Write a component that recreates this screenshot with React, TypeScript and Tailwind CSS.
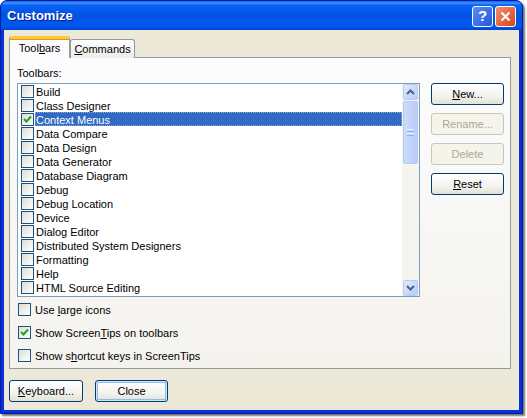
import React from 'react';

const toolbars = [
    'Build',
    'Class Designer',
    'Context Menus',
    'Data Compare',
    'Data Design',
    'Data Generator',
    'Database Diagram',
    'Debug',
    'Debug Location',
    'Device',
    'Dialog Editor',
    'Distributed System Designers',
    'Formatting',
    'Help',
    'HTML Source Editing',
];

const CheckBox = ({ checked }: { checked?: boolean }) => (
    <span className="flex h-[13px] w-[13px] shrink-0 items-center justify-center border border-[#1C5180] bg-[linear-gradient(135deg,#DCDCD7,#FFFFFF)]">
        {checked && (
            <svg width="9" height="9" viewBox="0 0 9 9">
                <path d="M1 4 L3.5 6.5 L8 1.5" stroke="#21A121" strokeWidth="2" fill="none" />
            </svg>
        )}
    </span>
);

const XpButton = ({
    children,
    disabled,
    isDefault,
    className = '',
}: {
    children: React.ReactNode;
    disabled?: boolean;
    isDefault?: boolean;
    className?: string;
}) => (
    <button
        type="button"
        className={
            disabled
                ? `flex h-[22px] w-[73px] items-center justify-center rounded-[3px] border border-[#C9C7BA] bg-[#F5F4EA] pt-[1px] text-[#ACA899] ${className}`
                : isDefault
                  ? `flex h-[22px] w-[73px] items-center justify-center rounded-[3px] border border-[#003C74] bg-[linear-gradient(180deg,#FFFFFF_0%,#F3F3EF_60%,#E3E1D6_100%)] pt-[1px] text-black shadow-[inset_0_0_0_1px_#CEE7FF,inset_0_0_0_2px_#98B8EA] ${className}`
                  : `flex h-[22px] w-[73px] items-center justify-center rounded-[3px] border border-[#003C74] bg-[linear-gradient(180deg,#FFFFFF_0%,#F3F3EF_60%,#E3E1D6_100%)] pt-[1px] text-black ${className}`
        }
    >
        {children}
    </button>
);

const ScrollArrow = ({ down }: { down?: boolean }) => (
    <div className="flex h-[16px] w-[15px] items-center justify-center rounded-[2px] border border-[#B7CAF5] bg-[linear-gradient(135deg,#E1EAFE,#B8CCF9)]">
        <svg width="9" height="6" viewBox="0 0 9 6">
            <path
                d={down ? 'M1 1 L4.5 4.5 L8 1' : 'M1 5 L4.5 1.5 L8 5'}
                stroke="#4D6185"
                strokeWidth="2"
                fill="none"
            />
        </svg>
    </div>
);

export default function App() {
    return (
        <div className="h-[418px] w-[527px] bg-white font-['Liberation_Sans',Arial,sans-serif] text-[11px] text-black">
            <div className="flex h-[414px] w-[523px] flex-col overflow-hidden rounded-t-[7px] border border-[#001A9C] bg-[#0831D9] shadow-[2px_2px_2px_rgba(0,0,0,0.55)]">
                {/* title bar */}
                <div className="flex h-[29px] shrink-0 items-center bg-[linear-gradient(180deg,#0A5FE9_0%,#3D95FF_7%,#0A61F6_14%,#0054E3_50%,#0058EE_88%,#0042D2_100%)] pl-[6px] pr-[6px]">
                    <span className="flex-1 pt-[1px] text-[13px] font-bold text-white [text-shadow:1px_1px_#0A1883]">
                        Customize
                    </span>
                    <div className="flex gap-[2px] pt-[1px]">
                        <div className="flex h-[21px] w-[21px] items-center justify-center rounded-[3px] border border-white bg-[linear-gradient(135deg,#5A8DF5,#2358D8)] text-[15px] font-bold text-white">
                            ?
                        </div>
                        <div className="flex h-[21px] w-[21px] items-center justify-center rounded-[3px] border border-white bg-[linear-gradient(135deg,#F0906E,#D5441F)]">
                            <svg width="11" height="11" viewBox="0 0 11 11">
                                <path d="M1.5 1.5 L9.5 9.5 M9.5 1.5 L1.5 9.5" stroke="white" strokeWidth="2.2" />
                            </svg>
                        </div>
                    </div>
                </div>

                {/* client area */}
                <div className="mx-[3px] mb-[3px] flex flex-1 flex-col bg-[#ECE9D8] pl-[5px] pr-[8px] pt-[6px]">
                    {/* tabs */}
                    <div className="relative z-10 -mb-px flex h-[22px] items-end">
                        <div className="flex h-[22px] w-[61px] flex-col rounded-t-[3px] border-x border-[#919B9C] bg-[#FCFCFE]">
                            <div className="h-[3px] rounded-t-[3px] bg-[#FFC83C] shadow-[0_1px_0_#E69A00]" />
                            <div className="flex flex-1 items-center justify-center">
                                Tool<span className="underline">b</span>ars
                            </div>
                        </div>
                        <div className="flex h-[19px] w-[65px] items-center justify-center rounded-t-[3px] border border-b-0 border-[#919B9C] bg-[linear-gradient(180deg,#FFFFFF,#ECEBE6)] pt-[1px]">
                            <span className="underline">C</span>ommands
                        </div>
                    </div>

                    {/* panel */}
                    <div className="flex h-[312px] flex-col border border-[#919B9C] bg-[linear-gradient(180deg,#FCFCFE,#F4F3EE)] pl-[7px] pt-[9px]">
                        <div className="h-[13px] leading-[13px]">Toolbars:</div>
                        <div className="mt-[3px] flex">
                            <div className="flex h-[214px] w-[403px] border border-[#7F9DB9] bg-white">
                                <div className="flex flex-1 flex-col overflow-hidden">
                                    {toolbars.map((name, i) => {
                                        const selected = i === 2;
                                        return (
                                            <div key={name} className="flex h-[14px] items-center pl-[3px]">
                                                <CheckBox checked={selected} />
                                                <span
                                                    className={
                                                        selected
                                                            ? 'ml-[1px] flex h-[14px] flex-1 items-center whitespace-nowrap bg-[#316AC5] pl-[1px] pt-[2px] text-white outline-1 -outline-offset-1 outline-dotted outline-[#8FA8D8]'
                                                            : 'ml-[1px] flex h-[14px] flex-1 items-center whitespace-nowrap pl-[1px] pt-[2px]'
                                                    }
                                                >
                                                    {name}
                                                </span>
                                            </div>
                                        );
                                    })}
                                </div>
                                <div className="flex w-[17px] flex-col items-center bg-[#F5F4EF]">
                                    <ScrollArrow />
                                    <div className="mt-[1px] flex h-[63px] w-[15px] items-center justify-center rounded-[2px] border border-[#B7CAF5] bg-[linear-gradient(90deg,#CCDBFC,#BACDF8)]">
                                        <div className="flex flex-col gap-[1px]">
                                            <div className="h-px w-[7px] bg-[#EEF4FE]" />
                                            <div className="h-px w-[7px] bg-[#8CB0F8]" />
                                            <div className="h-px w-[7px] bg-[#EEF4FE]" />
                                            <div className="h-px w-[7px] bg-[#8CB0F8]" />
                                        </div>
                                    </div>
                                    <div className="flex-1" />
                                    <ScrollArrow down />
                                </div>
                            </div>
                            <div className="ml-[11px] flex flex-col gap-[8px]">
                                <XpButton>
                                    <span className="underline">N</span>ew...
                                </XpButton>
                                <XpButton disabled>Rename...</XpButton>
                                <XpButton disabled>Delete</XpButton>
                                <XpButton>
                                    <span className="underline">R</span>eset
                                </XpButton>
                            </div>
                        </div>

                        <div className="mt-[6px] flex flex-col gap-[10px] pl-[1px]">
                            <label className="flex h-[13px] items-center gap-[4px]">
                                <CheckBox />
                                <span className="pt-[2px]">
                                    Use <span className="underline">l</span>arge icons
                                </span>
                            </label>
                            <label className="flex h-[13px] items-center gap-[4px]">
                                <CheckBox checked />
                                <span className="pt-[2px]">
                                    Show Screen<span className="underline">T</span>ips on toolbars
                                </span>
                            </label>
                            <label className="flex h-[13px] items-center gap-[4px]">
                                <CheckBox />
                                <span className="pt-[2px]">
                                    Show s<span className="underline">h</span>ortcut keys in ScreenTips
                                </span>
                            </label>
                        </div>
                    </div>

                    {/* bottom buttons */}
                    <div className="mt-[11px] flex gap-[12px]">
                        <XpButton className="w-[74px]">
                            <span className="underline">K</span>eyboard...
                        </XpButton>
                        <XpButton isDefault>Close</XpButton>
                    </div>
                </div>
            </div>
        </div>
    );
}
